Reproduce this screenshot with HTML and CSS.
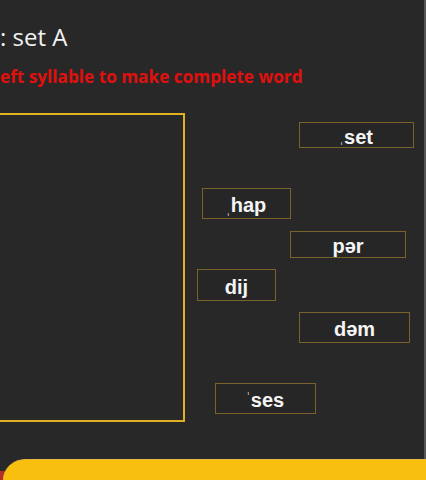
FILE: index.html
```html
<!DOCTYPE html>
<html lang="en">
<head>
  <meta charset="UTF-8">
  <meta name="viewport" content="width=device-width, initial-scale=1.0">
  <title>Syllable Match: set A</title>
  <link rel="stylesheet" href="styles.css">
</head>
<body>
  <div class="slide">
    <header class="slide-head">
      <h1 class="title">: set A</h1>
      <p class="task">eft syllable to make complete word</p>
    </header>

    <div class="board">
      <div class="drop-box"></div>

      <div class="tiles">
        <div class="tile tile-set"><span class="stress low">ˌ</span>set</div>
        <div class="tile tile-hap"><span class="stress low">ˌ</span>hap</div>
        <div class="tile tile-per">pər</div>
        <div class="tile tile-dij">dij</div>
        <div class="tile tile-dem">dəm</div>
        <div class="tile tile-ses"><span class="stress high">ˈ</span>ses</div>
      </div>
    </div>
  </div>

  <footer class="slide-foot">
    <div class="foot-bar"></div>
  </footer>
</body>
</html>
```

FILE: styles.css
```css
* {
  margin: 0;
  padding: 0;
  box-sizing: border-box;
}

body {
  background-color: #282828;
  width: 426px;
  height: 480px;
  overflow: hidden;
  font-family: 'Open Sans', sans-serif;
}

.slide {
  width: 426px;
  height: 459px;
  border-right: 2px solid #565656;
  overflow: hidden;
}

/* heading */
.slide-head {
  padding-top: 23px;
}

.title {
  font-size: 24px;
  font-weight: 400;
  line-height: 28px;
  color: #f2f2f2;
}

.task {
  margin-top: 16px;
  font-size: 17.2px;
  font-weight: 700;
  line-height: 20px;
  color: #e0100e;
}

/* board */
.board {
  display: flex;
  margin-top: 26px;
}

.drop-box {
  flex: none;
  margin-left: -20px;
  width: 205px;
  height: 309px;
  border: 2px solid #e2ae22;
}

.tiles {
  display: flex;
  flex-direction: column;
  align-items: flex-start;
}

.tile {
  display: flex;
  justify-content: center;
  align-items: center;
  padding-top: 3px;
  border: 1px solid #7a632a;
  background-color: #262626;
  font-family: 'Liberation Sans', Arial, sans-serif;
  font-size: 20px;
  font-weight: 700;
  line-height: 1;
  color: #f5f5f5;
}

.stress {
  font-family: 'DejaVu Sans', sans-serif;
  font-size: 11px;
  font-weight: 400;
  color: #d8d8d8;
  margin-right: 1px;
}

.stress.low {
  align-self: flex-end;
  margin-bottom: 2px;
}

.stress.high {
  align-self: flex-start;
  margin-top: 4px;
}

.tile-set { margin: 9px 0 0 114px; width: 115px; height: 26px; }
.tile-hap { margin: 40px 0 0 17px; width: 89px; height: 31px; }
.tile-per { margin: 12px 0 0 105px; width: 116px; height: 27px; }
.tile-dij { margin: 11px 0 0 12px; width: 79px; height: 32px; }
.tile-dem { margin: 11px 0 0 114px; width: 111px; height: 31px; }
.tile-ses { margin: 40px 0 0 30px; width: 101px; height: 31px; }

/* footer strip */
.slide-foot {
  height: 21px;
  padding-left: 3px;
  background: linear-gradient(#b2302c, #b2302c) left bottom / 30px 9px no-repeat;
}

.foot-bar {
  height: 21px;
  background-color: #f8bf0f;
  border-top: 1px solid #e9b83a;
  border-top-left-radius: 30px 28px;
}
```
